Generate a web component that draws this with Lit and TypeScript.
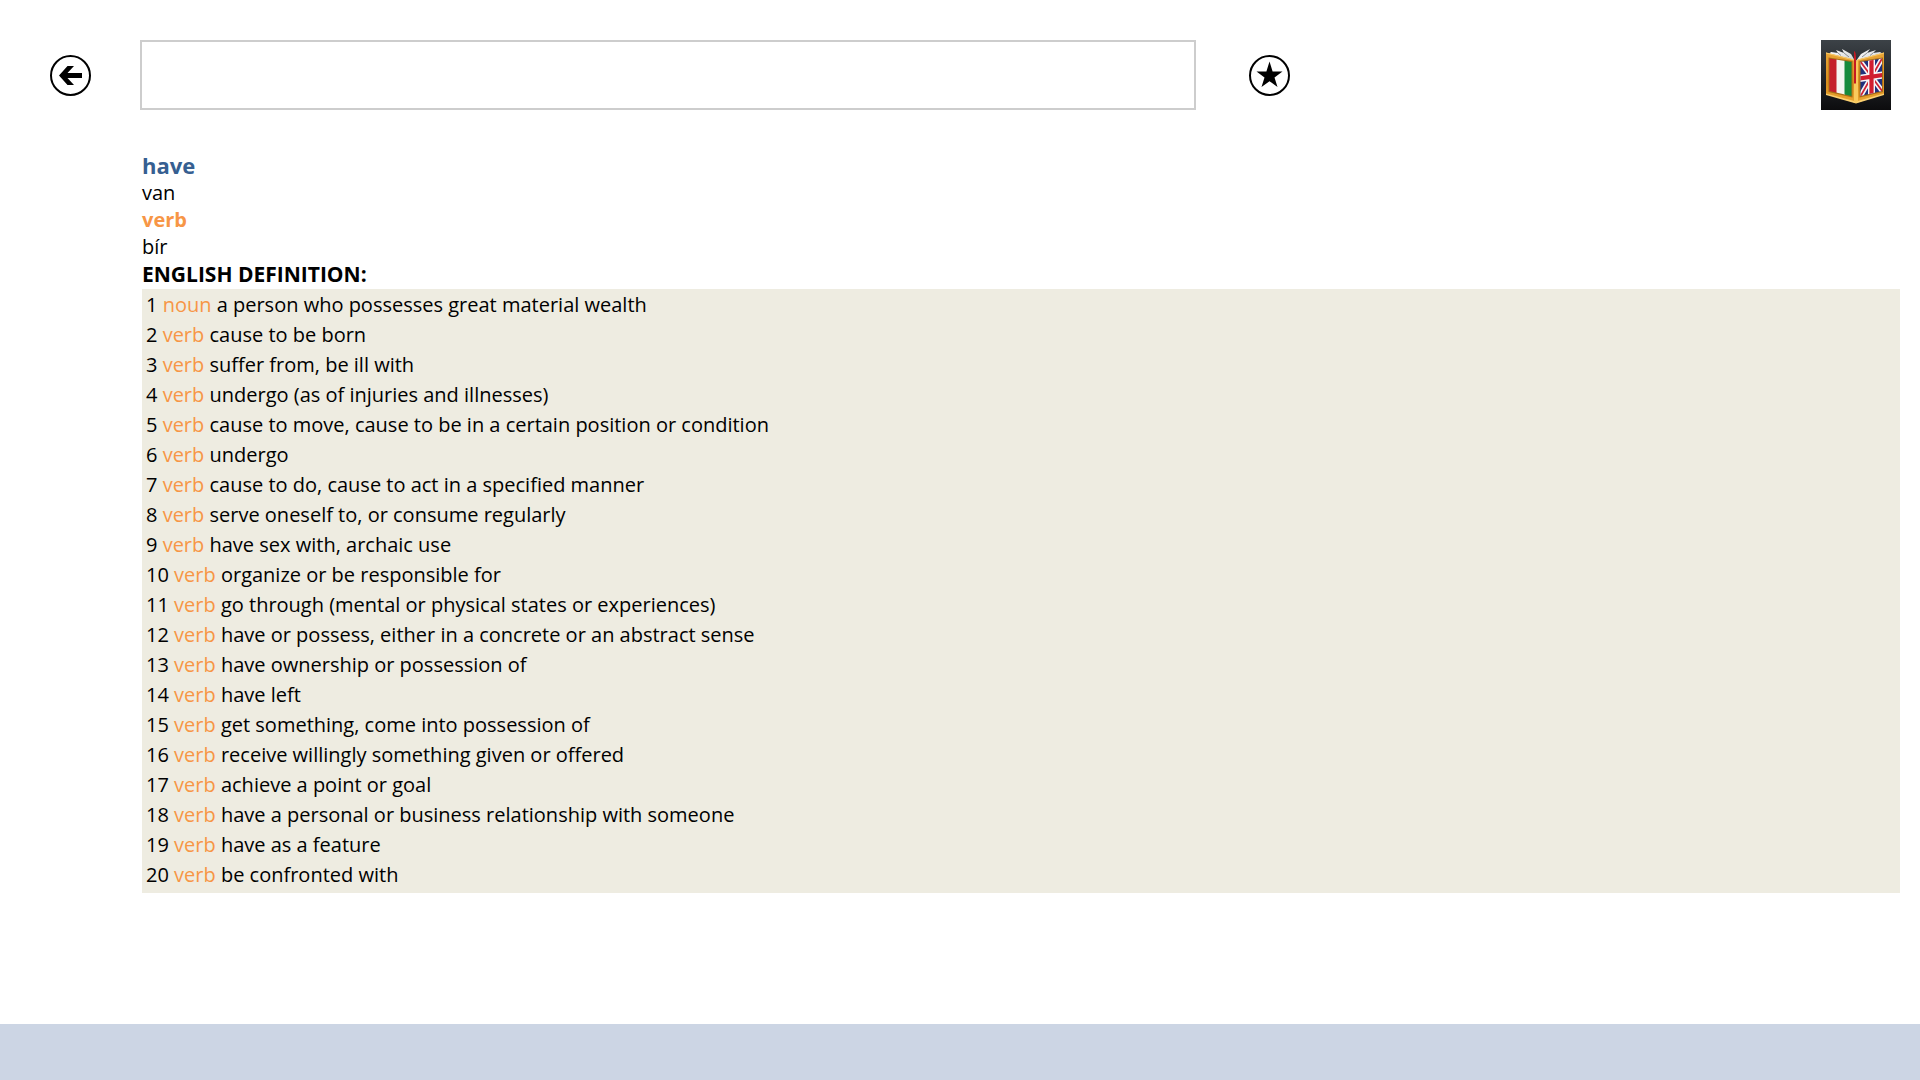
import { LitElement, html, css } from "lit";
import { customElement, state } from "lit/decorators.js";

type Definition = { kind: string; text: string };

const DEFINITIONS: Definition[] = [
  { kind: "noun", text: "a person who possesses great material wealth" },
  { kind: "verb", text: "cause to be born" },
  { kind: "verb", text: "suffer from, be ill with" },
  { kind: "verb", text: "undergo (as of injuries and illnesses)" },
  { kind: "verb", text: "cause to move, cause to be in a certain position or condition" },
  { kind: "verb", text: "undergo" },
  { kind: "verb", text: "cause to do, cause to act in a specified manner" },
  { kind: "verb", text: "serve oneself to, or consume regularly" },
  { kind: "verb", text: "have sex with, archaic use" },
  { kind: "verb", text: "organize or be responsible for" },
  { kind: "verb", text: "go through (mental or physical states or experiences)" },
  { kind: "verb", text: "have or possess, either in a concrete or an abstract sense" },
  { kind: "verb", text: "have ownership or possession of" },
  { kind: "verb", text: "have left" },
  { kind: "verb", text: "get something, come into possession of" },
  { kind: "verb", text: "receive willingly something given or offered" },
  { kind: "verb", text: "achieve a point or goal" },
  { kind: "verb", text: "have a personal or business relationship with someone" },
  { kind: "verb", text: "have as a feature" },
  { kind: "verb", text: "be confronted with" },
];

@customElement("dictionary-logo")
export class DictionaryLogo extends LitElement {
  static styles = css`
    :host {
      display: block;
      width: 70px;
      height: 70px;
    }
    .logo {
      display: block;
      width: 100%;
      height: 100%;
    }
  `;

  render() {
    return html`
      <svg class="logo" viewBox="0 0 70 70" aria-hidden="true">
        <defs>
          <linearGradient id="tile" x1="0" y1="0" x2="0" y2="1">
            <stop offset="0" stop-color="#3c4247" />
            <stop offset="0.5" stop-color="#23262a" />
            <stop offset="1" stop-color="#0c0c0e" />
          </linearGradient>
          <linearGradient id="cover" x1="0" y1="0" x2="0" y2="1">
            <stop offset="0" stop-color="#e9a536" />
            <stop offset="0.6" stop-color="#d98f1f" />
            <stop offset="1" stop-color="#eaa531" />
          </linearGradient>
          <linearGradient id="page" x1="0" y1="0" x2="1" y2="1">
            <stop offset="0" stop-color="#ffffff" />
            <stop offset="1" stop-color="#c4c7ca" />
          </linearGradient>
          <clipPath id="left"><path d="M8.500 18.500 30.500 22V56L8.500 51Z" /></clipPath>
          <clipPath id="right"><path d="M39.500 22 61 18.500V51L39.500 56Z" /></clipPath>
        </defs>
        <rect width="70" height="70" fill="url(#tile)" />
        <path d="M8 14 10 12 17 13 15 10 23 13 21 9 30 14 34 21V26L8 18Z" fill="url(#page)" />
        <path d="M62 14 59 12 52 13 55 10 46 13 49 9 40 14 35 21V26L62 18Z" fill="url(#page)" />
        <path d="M17 13 20 15.500M23 13 28 17M52 13 49 15.500M46 13 41 17" fill="none" stroke="#74787c" stroke-width="0.800" />
        <path d="M5 12.500 33 19.500 35 21 37 19.500 63 12.500V54L35 63 5 54Z" fill="url(#cover)" />
        <path d="M5 12.500 33 19.500 35 21 37 19.500 63 12.500V13.500L37 20.500 35 22 33 20.500 5 13.500Z" fill="#f8cb6c" />
        <path d="M5 53.500 35 61.500 63 53.500V55L35 63.500 5 55Z" fill="#fbd070" />
        <path d="M33 20.500 35 22 37 20.500V62L35 63 33 62Z" fill="#f9c95c" />
        <path d="M7.500 17.500 31.500 21V57.500L7.500 52Z" fill="#a66c17" />
        <path d="M38.500 21 62 17.500V52L38.500 57.500Z" fill="#a66c17" />
        <g clip-path="url(#left)">
          <rect x="8" y="15" width="8" height="43" fill="#c51f2b" />
          <rect x="15.500" y="15" width="8.500" height="43" fill="#f5f5f2" />
          <rect x="23.500" y="15" width="8" height="43" fill="#158a3c" />
        </g>
        <g clip-path="url(#right)">
          <rect x="39" y="16" width="23" height="42" fill="#20307c" />
          <path d="M39 21 62 52M39 57 62 17" stroke="#f6f6f8" stroke-width="5" />
          <path d="M39 21 62 52M39 57 62 17" stroke="#cf2335" stroke-width="1.800" />
          <path d="M50.500 15V60M38 38.500 62 35" stroke="#f6f6f8" stroke-width="7" />
          <path d="M50.500 15V60M38 38.500 62 35" stroke="#d01d30" stroke-width="4.200" />
        </g>
        <path d="M33 11C35 12 35 16 35 20V43L34 44 33 43Z" fill="#c41a22" />
      </svg>
    `;
  }
}

@customElement("app-root")
export class AppRoot extends LitElement {
  static styles = css`
    :host {
      display: flex;
      flex-direction: column;
      min-height: 100vh;
      background: #fff;
      color: #000;
      font-family: "Segoe UI", "Open Sans", "Noto Sans", sans-serif;
      font-size: 20px;
      line-height: 26px;
    }
    .toolbar {
      display: flex;
      align-items: center;
      padding: 40px 29px 0 50px;
    }
    .round {
      flex: none;
      width: 41px;
      height: 41px;
      padding: 0;
      border: 0;
      background: none;
      cursor: pointer;
    }
    .glyph {
      display: block;
      width: 100%;
      height: 100%;
    }
    .search {
      box-sizing: border-box;
      width: 55vw;
      height: 70px;
      margin: 0 53px 0 49px;
      padding: 0 16px;
      border: 2px solid #cdcdcd;
      border-radius: 0;
      outline: none;
      background: #fff;
      font: inherit;
    }
    .logo {
      margin-left: auto;
    }
    .entry {
      flex: 1;
      padding: 40px 20px 40px 142px;
    }
    .word,
    .kind,
    .section,
    .plain {
      margin: 0;
    }
    .word {
      color: #365f91;
      font-size: 22px;
      line-height: 30px;
    }
    .kind {
      color: #f79646;
      font-weight: 700;
      line-height: 28px;
    }
    .section {
      font-size: 21px;
      line-height: 29px;
    }
    .definitions {
      margin: 0;
      padding: 1px 4px 3px;
      list-style: none;
      background: #eeece1;
      line-height: 30px;
    }
    .tag {
      color: #f79646;
    }
    .footer {
      height: 56px;
      background: #ccd5e4;
    }
  `;

  @state() private query = "";

  private onInput(event: Event) {
    this.query = (event.target as HTMLInputElement).value;
  }

  render() {
    return html`
      <header class="toolbar">
        <button class="round" type="button" aria-label="Back">
          <svg class="glyph" viewBox="0 0 41 41" aria-hidden="true">
            <circle cx="20.500" cy="20.500" r="19.500" fill="none" stroke="#000" stroke-width="2" />
            <path d="M9 20.500 17.500 11H24L17.500 18H32V23H17.500L24 30H17.500Z" />
          </svg>
        </button>
        <input
          class="search"
          type="text"
          aria-label="Search"
          .value=${this.query}
          @input=${this.onInput}
        />
        <button class="round" type="button" aria-label="Favorite">
          <svg class="glyph" viewBox="0 0 41 41" aria-hidden="true">
            <circle cx="20.500" cy="20.500" r="19.500" fill="none" stroke="#000" stroke-width="2" />
            <path d="M20.500 6.500 23.600 16.500H33.500L25.500 22.500 28.500 32 20.500 26.200 12.500 32 15.500 22.500 7.500 16.500H17.400Z" />
          </svg>
        </button>
        <dictionary-logo class="logo"></dictionary-logo>
      </header>
      <main class="entry">
        <h1 class="word">have</h1>
        <p class="plain">van</p>
        <p class="kind">verb</p>
        <p class="plain">bír</p>
        <h2 class="section">ENGLISH DEFINITION:</h2>
        <ol class="definitions">
          ${DEFINITIONS.map(
            (item, index) => html`<li>${index + 1} <span class="tag">${item.kind}</span> ${item.text}</li>`,
          )}
        </ol>
      </main>
      <footer class="footer"></footer>
    `;
  }
}
